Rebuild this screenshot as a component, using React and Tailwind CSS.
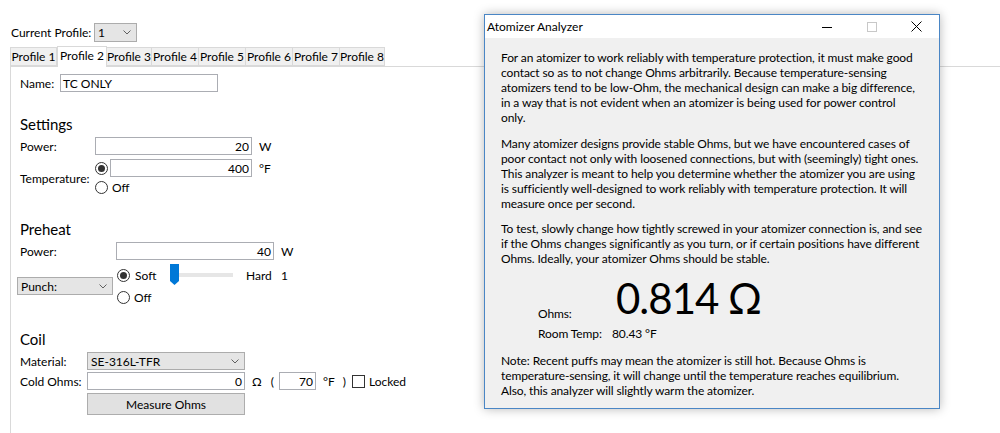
import React from "react";

const Radio = ({ checked }) => (
  <span className="inline-flex w-[13px] h-[13px] rounded-full border border-[#333] bg-white items-center justify-center shrink-0">
    {checked && <span className="w-[7px] h-[7px] rounded-full bg-[#333]" />}
  </span>
);

const TextBox = ({ value, className = "", align = "right" }) => (
  <div
    className={`h-[18px] border border-[#abadb3] bg-white flex items-center px-[2px] ${
      align === "right" ? "justify-end" : "justify-start"
    } ${className}`}
  >
    {value}
  </div>
);

const Chevron = () => (
  <svg width="8" height="5" viewBox="0 0 8 5" className="shrink-0">
    <path d="M0.5 0.5 L4 4 L7.5 0.5" fill="none" stroke="#606060" strokeWidth="1" />
  </svg>
);

const Combo = ({ value, className = "" }) => (
  <div className={`h-[18px] border border-[#acacac] bg-[#e5e5e5] flex items-center justify-between pl-[3px] pr-[5px] ${className}`}>
    <span>{value}</span>
    <Chevron />
  </div>
);

const tabs = [
  ["Profile 1", 47],
  ["Profile 2", 50],
  ["Profile 3", 46],
  ["Profile 4", 48],
  ["Profile 5", 48],
  ["Profile 6", 48],
  ["Profile 7", 48],
  ["Profile 8", 46],
];
const tabW = {
  47: "w-[47px]",
  50: "w-[50px]",
  46: "w-[46px]",
  48: "w-[48px]",
};

const p1 = [
  "For an atomizer to work reliably with temperature protection, it must make good",
  "contact so as to not change Ohms arbitrarily. Because temperature-sensing",
  "atomizers tend to be low-Ohm, the mechanical design can make a big difference,",
  "in a way that is not evident when an atomizer is being used for power control",
  "only.",
];
const p2 = [
  "Many atomizer designs provide stable Ohms, but we have encountered cases of",
  "poor contact not only with loosened connections, but with (seemingly) tight ones.",
  "This analyzer is meant to help you determine whether the atomizer you are using",
  "is sufficiently well-designed to work reliably with temperature protection. It will",
  "measure once per second.",
];
const p3 = [
  "To test, slowly change how tightly screwed in your atomizer connection is, and see",
  "if the Ohms changes significantly as you turn, or if certain positions have different",
  "Ohms. Ideally, your atomizer Ohms should be stable.",
];
const p4 = [
  "Note: Recent puffs may mean the atomizer is still hot. Because Ohms is",
  "temperature-sensing, it will change until the temperature reaches equilibrium.",
  "Also, this analyzer will slightly warm the atomizer.",
];

const Para = ({ lines, className = "" }) => (
  <div className={className}>
    {lines.map((l, i) => (
      <div key={i} className="whitespace-nowrap">
        {l}
      </div>
    ))}
  </div>
);

export default function App() {
  return (
    <div className="relative w-[1000px] h-[433px] overflow-hidden bg-white text-black font-['Lato',sans-serif] text-[12px] leading-[15px] flex flex-col">
      {/* Current profile */}
      <div className="flex items-center pl-[11px] pt-[23px]">
        <span className="w-[83px]">Current Profile:</span>
        <Combo value="1" className="w-[43px] h-[19px]" />
      </div>

      {/* Tabs */}
      <div className="flex items-end pl-[10px] mt-[3px] h-[21px]">
        {tabs.map(([t, w], i) =>
          i === 1 ? (
            <div
              key={t}
              className={`${tabW[w]} h-[21px] bg-white border border-b-0 border-[#d9d9d9] flex items-start justify-center pt-[1px] relative top-[1px]`}
            >
              {t}
            </div>
          ) : (
            <div
              key={t}
              className={`${tabW[w]} h-[19px] bg-[#f0f0f0] border border-[#d9d9d9] flex items-center justify-center -ml-px first:ml-0`}
            >
              {t}
            </div>
          )
        )}
      </div>

      {/* Tab content panel */}
      <div className="flex-1 ml-[10px] border-t border-l border-[#d9d9d9] pt-[7px] pl-[9px]">
        {/* Name */}
        <div className="flex items-center h-[18px]">
          <span className="w-[40px]">Name:</span>
          <TextBox value="TC ONLY" align="left" className="w-[158px]" />
        </div>

        {/* Settings */}
        <div className="mt-[22px] text-[15px] leading-[20px]">Settings</div>
        <div className="mt-[3px] flex items-center h-[18px]">
          <span className="w-[75px]">Power:</span>
          <TextBox value="20" className="w-[157px]" />
          <span className="ml-[7px]">W</span>
        </div>
        <div className="mt-[4px] flex items-center">
          <span className="w-[75px]">Temperature:</span>
          <div className="flex flex-col">
            <div className="flex items-center h-[18px]">
              <span className="w-[15px] flex">
                <Radio checked />
              </span>
              <TextBox value="400" className="w-[142px]" />
              <span className="ml-[7px]">°F</span>
            </div>
            <div className="flex items-center h-[20px]">
              <Radio />
              <span className="ml-[4px]">Off</span>
            </div>
          </div>
        </div>

        {/* Preheat */}
        <div className="mt-[22px] text-[15px] leading-[20px]">Preheat</div>
        <div className="mt-[3px] flex items-center h-[18px]">
          <span className="w-[96px]">Power:</span>
          <TextBox value="40" className="w-[158px]" />
          <span className="ml-[7px]">W</span>
        </div>
        <div className="mt-[4px] flex items-center">
          <div className="-ml-[3px] w-[100px]">
            <Combo value="Punch:" className="w-[96px]" />
          </div>
          <div className="flex flex-col">
            <div className="flex items-center h-[22px]">
              <Radio checked />
              <span className="ml-[5px] w-[35px]">Soft</span>
              <div className="relative w-[63px] h-[22px]">
                <div className="absolute left-0 right-0 top-[9px] h-[4px] bg-[#e6e6e6]" />
                <svg width="9" height="21" viewBox="0 0 9 21" className="absolute left-0 top-0">
                  <path d="M0 0 H9 V17 L4.5 21 L0 17 Z" fill="#0078d7" />
                </svg>
              </div>
              <span className="ml-[13px] w-[35px]">Hard</span>
              <span>1</span>
            </div>
            <div className="flex items-center h-[22px]">
              <Radio />
              <span className="ml-[4px]">Off</span>
            </div>
          </div>
        </div>

        {/* Coil */}
        <div className="mt-[21px] text-[15px] leading-[20px]">Coil</div>
        <div className="mt-[3px] flex items-center h-[18px]">
          <span className="w-[67px]">Material:</span>
          <Combo value="SE-316L-TFR" className="w-[158px]" />
        </div>
        <div className="mt-[2px] flex items-center h-[18px]">
          <span className="w-[67px]">Cold Ohms:</span>
          <TextBox value="0" className="w-[158px]" />
          <span className="ml-[7px]">Ω</span>
          <span className="ml-[9px]">(</span>
          <TextBox value="70" className="w-[37px] ml-[5px]" />
          <span className="ml-[7px]">°F</span>
          <span className="ml-[8px]">)</span>
          <span className="ml-[6px] w-[13px] h-[13px] border border-[#333] bg-white" />
          <span className="ml-[4px]">Locked</span>
        </div>
        <div className="mt-[3px] ml-[67px] w-[158px] h-[22px] bg-[#e1e1e1] border border-[#adadad] flex items-center justify-center">
          Measure Ohms
        </div>
      </div>

      {/* Atomizer Analyzer window */}
      <div className="absolute left-[484px] top-[14px] w-[456px] h-[395px] border border-[#4a86c5] bg-[#f0f0f0] shadow-[0_0_10px_rgba(0,0,0,0.28)] flex flex-col">
        <div className="h-[23px] bg-white flex items-center pl-[2px] shrink-0">
          <span className="flex-1">Atomizer Analyzer</span>
          <div className="flex items-center h-full">
            <div className="w-[45px] h-full flex items-center justify-center">
              <svg width="10" height="10" viewBox="0 0 10 10">
                <path d="M0 5.5 H10" stroke="#000" strokeWidth="1" />
              </svg>
            </div>
            <div className="w-[45px] h-full flex items-center justify-center">
              <svg width="10" height="10" viewBox="0 0 10 10">
                <rect x="0.5" y="0.5" width="9" height="9" fill="none" stroke="#c8c8c8" strokeWidth="1" />
              </svg>
            </div>
            <div className="w-[45px] h-full flex items-center justify-center">
              <svg width="11" height="11" viewBox="0 0 11 11">
                <path d="M0.5 0.5 L10.5 10.5 M10.5 0.5 L0.5 10.5" stroke="#000" strokeWidth="1" />
              </svg>
            </div>
          </div>
        </div>
        <div className="pl-[16px] pt-[12px] tracking-[-0.11px]">
          <Para lines={p1} />
          <Para lines={p2} className="mt-[11px]" />
          <Para lines={p3} className="mt-[10px]" />
          <div className="mt-[8px] ml-[37px] grid grid-cols-[74px_auto] items-end">
            <span className="mb-[1px]">Ohms:</span>
            <span className="pl-[4px] text-[42px] leading-[48px] font-normal tracking-[-1px]">0.814 Ω</span>
            <span className="mt-[4px]">Room Temp:</span>
            <span className="mt-[4px]">80.43 °F</span>
          </div>
          <Para lines={p4} className="mt-[12px]" />
        </div>
      </div>
    </div>
  );
}
